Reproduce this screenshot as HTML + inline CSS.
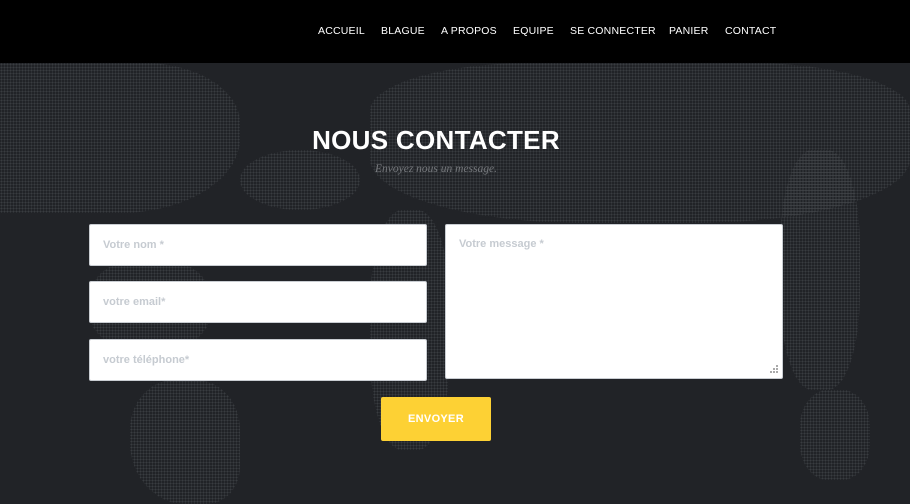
<!DOCTYPE html>
<html><head><meta charset="utf-8"><style>
*{margin:0;padding:0;box-sizing:border-box}
body{width:910px;height:504px;overflow:hidden;background:#212327;font-family:"Liberation Sans",sans-serif;position:relative}
.hdr{position:absolute;left:0;top:0;width:910px;height:63px;background:#000}
.nav{position:absolute;top:25px;left:318px;font-size:10.5px;color:#fff;letter-spacing:.2px}
.nav span{position:absolute;white-space:nowrap}
.land{position:absolute;background-image:radial-gradient(circle,#4a4d51 0.8px,transparent 1px);background-size:3px 3px;opacity:.6}
h1{position:absolute;top:125px;left:0;width:872px;text-align:center;color:#fff;font-size:26px;font-weight:bold;letter-spacing:.3px}
.sub{position:absolute;top:163px;left:0;width:872px;text-align:center;color:#777a7e;font-family:"Liberation Serif",serif;font-style:italic;font-size:11.5px}
.in{position:absolute;background:#fff;border:1px solid #c9cdd2;border-radius:2px;color:#c6cbd1;font-size:11px;font-weight:bold;padding-left:13px}
.btn{position:absolute;left:381px;top:397px;width:110px;height:44px;background:#fdd134;border-radius:2px;color:#fff;font-size:11px;font-weight:bold;text-align:center;line-height:44px;letter-spacing:.3px}
</style></head><body>
<div class="land" style="left:0;top:63px;width:240px;height:150px;border-radius:0 40% 50% 0"></div>
<div class="land" style="left:90px;top:260px;width:120px;height:90px;border-radius:40%"></div>
<div class="land" style="left:130px;top:380px;width:110px;height:124px;border-radius:40% 40% 30% 50%"></div>
<div class="land" style="left:240px;top:150px;width:120px;height:60px;border-radius:50%"></div>
<div class="land" style="left:370px;top:63px;width:540px;height:160px;border-radius:30% 30% 40% 40%"></div>
<div class="land" style="left:370px;top:210px;width:80px;height:240px;border-radius:40%"></div>
<div class="land" style="left:780px;top:150px;width:80px;height:240px;border-radius:40%"></div>
<div class="land" style="left:800px;top:390px;width:70px;height:90px;border-radius:40%"></div>
<div class="hdr"></div>
<div class="nav">
<span style="left:0">ACCUEIL</span><span style="left:63px">BLAGUE</span><span style="left:123px">A PROPOS</span><span style="left:195px">EQUIPE</span><span style="left:252px">SE CONNECTER</span><span style="left:351px">PANIER</span><span style="left:407px">CONTACT</span>
</div>
<h1>NOUS CONTACTER</h1>
<div class="sub">Envoyez nous un message.</div>
<div class="in" style="left:89px;top:224px;width:338px;height:42px;line-height:40px">Votre nom *</div>
<div class="in" style="left:89px;top:281px;width:338px;height:42px;line-height:40px">votre email*</div>
<div class="in" style="left:89px;top:339px;width:338px;height:42px;line-height:40px">votre téléphone*</div>
<div class="in" style="left:445px;top:224px;width:338px;height:155px;padding-top:13px">Votre message *
<svg style="position:absolute;right:3px;bottom:3px" width="10" height="10"><g fill="#aaa"><rect x="7" y="0" width="2" height="2"/><rect x="4" y="3" width="2" height="2"/><rect x="7" y="3" width="2" height="2"/><rect x="1" y="6" width="2" height="2"/><rect x="4" y="6" width="2" height="2"/><rect x="7" y="6" width="2" height="2"/></g></svg></div>
<div class="btn">ENVOYER</div>
</body></html>
